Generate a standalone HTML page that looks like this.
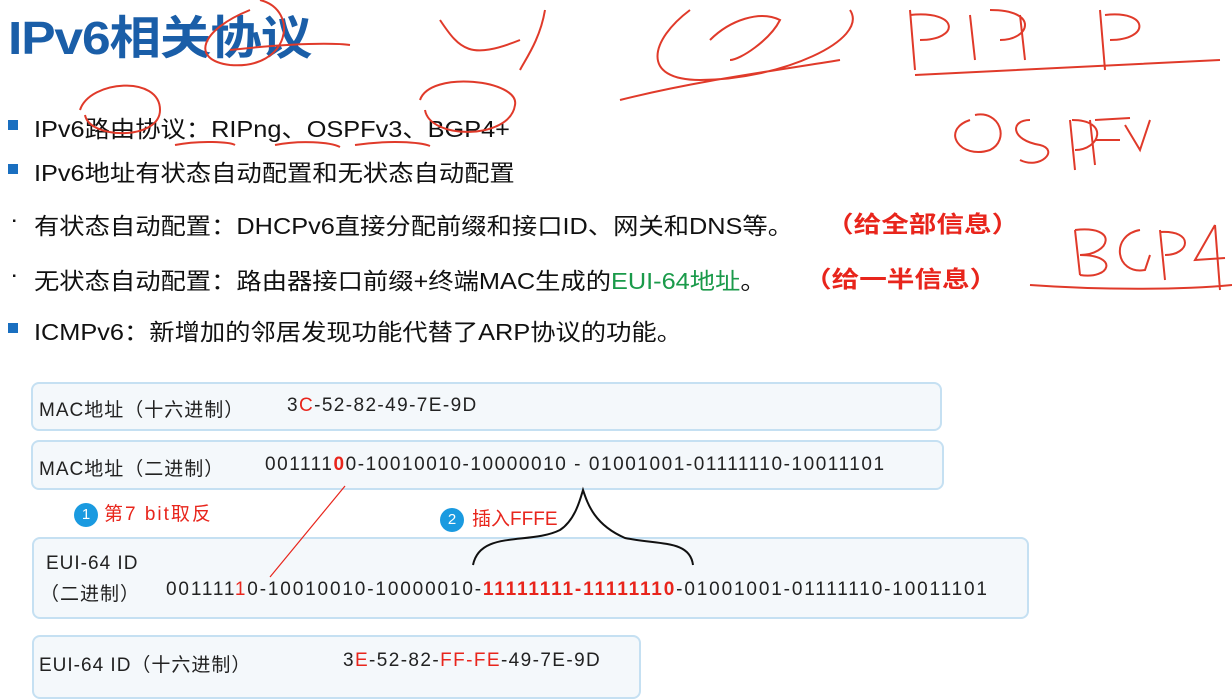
<!DOCTYPE html>
<html><head><meta charset="utf-8"><style>
body{margin:0;width:1232px;height:678px;background:#fff;position:relative;overflow:hidden;font-family:"Liberation Sans","Noto Sans CJK SC",sans-serif;color:#111}
.t{position:absolute;white-space:nowrap;transform-origin:0 0}
h1{position:absolute;left:8px;top:2px;margin:0;font-size:46px;color:#1a5ea8;font-weight:bold;letter-spacing:-1px;transform:scaleX(1.12);transform-origin:0 0;white-space:nowrap}
.b{font-size:23px;transform:scaleX(1.1)}
.sq{position:absolute;width:10px;height:10px;background:#1a6fc0}
.box{position:absolute;background:#f4f8fb;border:2px solid #c5e0f2;border-radius:8px}
.m{font-family:"Liberation Sans","Noto Sans CJK SC",sans-serif;font-size:19px;letter-spacing:1px;color:#222}
.r{color:#e8251c}
.c{position:absolute;width:24px;height:24px;border-radius:50%;background:#1a9ae0;color:#fff;font-size:15px;text-align:center;line-height:24px}
</style></head><body>
<h1>IPv6相关协议</h1>
<div class="sq" style="left:8px;top:120px"></div>
<div class="t b" style="left:34px;top:110px">IPv6路由协议：RIPng、OSPFv3、BGP4+</div>
<div class="sq" style="left:8px;top:164px"></div>
<div class="t b" style="left:34px;top:154px">IPv6地址有状态自动配置和无状态自动配置</div>
<div class="t b" style="left:10px;top:206px">·</div>
<div class="t b" style="left:34px;top:207px">有状态自动配置：DHCPv6直接分配前缀和接口ID、网关和DNS等。</div>
<div class="t b" style="left:826px;top:205px;color:#e8251c;font-weight:bold;transform:scaleX(1.2)">（给全部信息）</div>
<div class="t b" style="left:10px;top:261px">·</div>
<div class="t b" style="left:34px;top:262px">无状态自动配置：路由器接口前缀+终端MAC生成的<span style="color:#1a9a4a">EUI-64地址</span>。</div>
<div class="t b" style="left:804px;top:260px;color:#e8251c;font-weight:bold;transform:scaleX(1.2)">（给一半信息）</div>
<div class="sq" style="left:8px;top:323px"></div>
<div class="t b" style="left:34px;top:313px">ICMPv6：新增加的邻居发现功能代替了ARP协议的功能。</div>

<div class="box" style="left:31px;top:382px;width:907px;height:45px"></div>
<div class="t m" style="left:39px;top:395px">MAC地址（十六进制）</div>
<div class="t m" style="left:287px;top:395px;letter-spacing:1.4px">3<span class="r">C</span>-52-82-49-7E-9D</div>
<div class="box" style="left:31px;top:440px;width:909px;height:46px"></div>
<div class="t m" style="left:39px;top:454px">MAC地址（二进制）</div>
<div class="t m" style="left:265px;top:454px;letter-spacing:1.55px">001111<span class="r" style="font-weight:bold">0</span>0-10010010-10000010 - 01001001-01111110-10011101</div>
<div class="c" style="left:74px;top:503px">1</div>
<div class="t m r" style="left:104px;top:499px;letter-spacing:2px">第7 bit取反</div>
<div class="c" style="left:440px;top:508px">2</div>
<div class="t m r" style="left:472px;top:504px;letter-spacing:0">插入FFFE</div>
<div class="box" style="left:32px;top:537px;width:993px;height:78px"></div>
<div class="t m" style="left:46px;top:553px">EUI-64 ID</div>
<div class="t m" style="left:40px;top:579px">（二进制）</div>
<div class="t m" style="left:166px;top:579px;letter-spacing:1.85px">001111<span class="r">1</span>0-10010010-10000010-<span class="r" style="font-weight:bold">11111111-11111110</span>-01001001-01111110-10011101</div>
<div class="box" style="left:32px;top:635px;width:605px;height:60px"></div>
<div class="t m" style="left:39px;top:650px">EUI-64 ID（十六进制）</div>
<div class="t m" style="left:343px;top:650px;letter-spacing:1.4px">3<span class="r">E</span>-52-82-<span class="r">FF-FE</span>-49-7E-9D</div>

<svg width="1232" height="678" style="position:absolute;left:0;top:0" fill="none">
<path d="M345 486 L270 577" stroke="#e8251c" stroke-width="1.2"/>
<path d="M473 565 C480 530 530 545 560 530 C575 520 580 500 583 490 C588 505 595 525 625 538 C660 545 690 540 693 565" stroke="#111" stroke-width="2"/>
<g stroke="#e03a2a" stroke-width="2">
<path d="M230 50 C320 40 350 45 350 45"/>
<path d="M250 10 C200 30 190 60 230 65 C290 70 300 10 260 0"/>
<path d="M80 110 C90 80 160 75 160 110 C160 140 90 140 85 115"/>
<path d="M420 100 C430 70 520 80 515 105 C510 140 430 140 425 110"/>
<path d="M175 145 C200 140 230 142 235 145 M275 145 C300 140 330 142 340 147 M355 145 C390 140 420 142 430 146"/>
<path d="M440 20 C460 50 470 60 520 40 M545 10 C540 40 525 60 520 70"/>
<path d="M690 10 C650 40 640 80 700 80 C780 80 870 40 850 10 M710 40 C730 20 760 10 780 20 C770 40 740 60 730 60 M620 100 C700 80 780 70 840 60"/>
<path d="M910 10 L915 70 M910 15 C960 10 960 40 920 40 M970 15 L975 60 M990 10 C1040 10 1030 40 1000 40 M1020 15 L1025 60 M1100 10 L1105 70 M1105 15 C1150 10 1150 40 1110 40 M915 75 C1000 70 1100 65 1220 60"/>
<path d="M970 120 C940 130 960 160 990 150 C1010 140 1000 110 975 115 M1030 120 C1010 120 1010 140 1040 145 C1060 150 1040 170 1020 160 M1070 120 L1075 170 M1072 120 C1110 120 1100 150 1075 150 M1090 120 L1095 165 M1095 120 L1130 118 M1095 140 L1120 140 M1125 125 L1140 150 L1150 120"/>
<path d="M1075 230 L1080 275 M1075 230 C1120 225 1110 255 1080 255 C1120 255 1110 280 1080 275 M1140 230 C1110 235 1115 275 1145 270 L1150 255 M1160 230 L1165 280 M1160 232 C1195 230 1190 255 1165 255 M1215 225 L1195 260 L1225 258 M1215 225 L1220 290 M1030 285 C1100 290 1180 290 1232 285"/>
</g>
</svg>
</body></html>
